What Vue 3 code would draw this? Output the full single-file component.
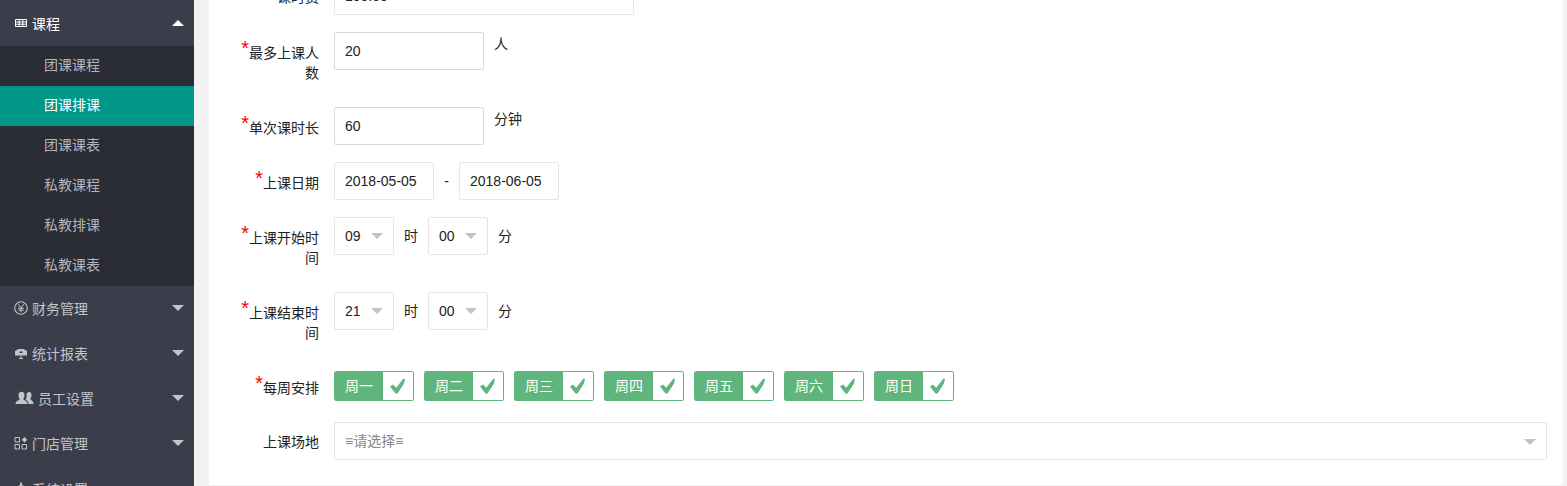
<script setup>
const subItems = [
  { name: '团课课程' },
  { name: '团课排课', active: true },
  { name: '团课课表' },
  { name: '私教课程' },
  { name: '私教排课' },
  { name: '私教课表' }
]
const weekDays = ['周一', '周二', '周三', '周四', '周五', '周六', '周日']
</script>

<template>
<div class="page">
  <aside class="side">
    <div class="nav-head nav-open">
      <svg class="ico" viewBox="0 0 14 14"><path d="M1.500 3.500h11v7h-11zM1.500 6h11M1.500 8.200h11M5.200 3.500v7M8.800 3.500v7" fill="none" stroke="currentColor" stroke-width="1"/></svg>
      <span>课程</span>
      <i class="tri tri-up"></i>
    </div>
    <div
      v-for="item in subItems"
      :key="item.name"
      class="nav-sub"
      :class="{ 'nav-sub-active': item.active }"
    >{{ item.name }}</div>
    <div class="nav-head">
      <svg class="ico" viewBox="0 0 14 14"><circle cx="7" cy="7" r="6.300" fill="none" stroke="currentColor" stroke-width="1.100"/><path d="M4.300 3.300L7 7l2.700-3.700M7 7v4.200M4.200 7.300h5.600M4.200 9.200h5.600" fill="none" stroke="currentColor"/></svg>
      <span>财务管理</span>
      <i class="tri"></i>
    </div>
    <div class="nav-head">
      <svg class="ico" viewBox="0 0 14 14"><path d="M1 5l3.500-2h5L13 5v4.500H1z" fill="currentColor"/><path d="M5.500 5.500h3v1.500h-3z" fill="#3b3e4a"/><path d="M7 9.500v3M5 12.500h4" stroke="currentColor" fill="none"/></svg>
      <span>统计报表</span>
      <i class="tri"></i>
    </div>
    <div class="nav-head">
      <svg class="ico ico-wide" viewBox="0 0 18 14"><path d="M0 13c0-3 3-3.500 4-4.500V7.500C3.200 6.500 3 5.500 3 4c0-2 1-3.300 3-3.300S9 2 9 4c0 1.500-.2 2.500-1 3.500v1c1 1 4 1.500 4 4.500z" fill="currentColor"/><path d="M13 13c0-2.500-1.500-3.500-3-4.500 1-1.500 1-2.500 1-4.500 0-1 .5-3 2.500-3S16 2.500 16 4.500c0 1-.3 2-1 3v1c1 .8 3 1.500 3 4.500z" fill="currentColor"/></svg>
      <span>员工设置</span>
      <i class="tri"></i>
    </div>
    <div class="nav-head">
      <svg class="ico" viewBox="0 0 14 14"><path d="M1 1.500h4.500V6H1zM1 8.500h4.500V13H1zM8 8.500h4.500V13H8z" fill="none" stroke="currentColor"/><path d="M10.500 1l2.700 2.700-2.700 2.700-2.700-2.700z" fill="currentColor"/></svg>
      <span>门店管理</span>
      <i class="tri"></i>
    </div>
    <div class="nav-head nav-last">
      <svg class="ico" viewBox="0 0 14 14"><circle cx="7" cy="7" r="3" fill="none" stroke="currentColor" stroke-width="2"/><path d="M7 .5v3M7 10.500v3M.5 7h3M10.500 7h3" stroke="currentColor" stroke-width="2"/></svg>
      <span>系统设置</span>
      <i class="tri"></i>
    </div>
  </aside>

  <main class="main">
    <div class="card">
      <form class="form">
        <div class="row">
          <label class="lab lab-plain">课时费</label>
          <div class="box box-fee">100.00</div>
        </div>

        <div class="row row-tall">
          <label class="lab"><b class="star">*</b>最多上课人数</label>
          <div class="box box-num">20</div>
          <span class="unit unit-top">人</span>
        </div>

        <div class="row">
          <label class="lab"><b class="star">*</b>单次课时长</label>
          <div class="box box-num">60</div>
          <span class="unit unit-top">分钟</span>
        </div>

        <div class="row">
          <label class="lab"><b class="star">*</b>上课日期</label>
          <div class="box box-date">2018-05-05</div>
          <span class="dash">-</span>
          <div class="box box-date">2018-06-05</div>
        </div>

        <div class="row row-tall">
          <label class="lab"><b class="star">*</b>上课开始时间</label>
          <div class="box box-sel">09<i class="tri-sel"></i></div>
          <span class="unit">时</span>
          <div class="box box-sel">00<i class="tri-sel"></i></div>
          <span class="unit">分</span>
        </div>

        <div class="row row-tall">
          <label class="lab"><b class="star">*</b>上课结束时间</label>
          <div class="box box-sel">21<i class="tri-sel"></i></div>
          <span class="unit">时</span>
          <div class="box box-sel">00<i class="tri-sel"></i></div>
          <span class="unit">分</span>
        </div>

        <div class="row row-week">
          <label class="lab lab-week"><b class="star">*</b>每周安排</label>
          <div class="week">
            <div v-for="day in weekDays" :key="day" class="check">
              <span class="check-name">{{ day }}</span>
              <span class="check-mark">
                <svg viewBox="0 0 18 18" width="18" height="18"><path d="M1 9.500L4 7.500l3.200 3.200L14.500 1.500l1.500.5-1 4.500-6.500 10H6.500z" fill="#5fb57b"/></svg>
              </span>
            </div>
          </div>
        </div>

        <div class="row row-last">
          <label class="lab lab-plain">上课场地</label>
          <div class="box box-place">≡请选择≡<i class="tri-sel tri-dark"></i></div>
        </div>
      </form>
    </div>
  </main>
</div>
</template>

<style>
html, body {
  margin: 0;
  background: #f2f2f3;
}
</style>

<style scoped>
.page {
  display: flex;
  width: 1567px;
  height: 486px;
  overflow: hidden;
  font-family: "Liberation Sans", "Noto Sans CJK SC", sans-serif;
  font-size: 14px;
  color: #222;
}

.side {
  flex: none;
  width: 194px;
  background: #3b3e4a;
}
.nav-head {
  box-sizing: border-box;
  display: flex;
  align-items: center;
  height: 45px;
  padding-left: 14px;
  padding-bottom: 2px;
  color: #c2c4c9;
}
.nav-open {
  height: 46px;
  padding-bottom: 0;
  color: #fff;
}
.nav-last {
  padding-bottom: 0;
}
.nav-head span {
  margin-left: 4px;
}
.ico {
  flex: none;
  width: 14px;
  height: 14px;
}
.ico-wide {
  width: 19px;
  margin-left: 1px;
}
.tri {
  margin-left: auto;
  margin-right: 10px;
  border-left: 6px solid transparent;
  border-right: 6px solid transparent;
  border-top: 6px solid #c2c4c9;
}
.tri-up {
  border-top: 0;
  border-bottom: 6px solid #fff;
}
.nav-sub {
  box-sizing: border-box;
  height: 40px;
  padding-left: 44px;
  line-height: 38px;
  background: #2a2c36;
  color: #b4b5b9;
}
.nav-sub-active {
  background: #009688;
  color: #fff;
}

.main {
  flex: 1;
  padding: 0 4px 1px 15px;
}
.card {
  height: 100%;
  background: #fff;
  overflow: hidden;
}
.form {
  margin-top: -23px;
  padding-left: 25px;
}

.row {
  display: flex;
  align-items: flex-start;
  min-height: 38px;
  margin-bottom: 17px;
}
.row-tall {
  min-height: 58px;
}
.row-week {
  padding: 4px 0;
  min-height: 30px;
}
.lab {
  flex: none;
  width: 85px;
  margin-right: 15px;
  padding-top: 11px;
  line-height: 20px;
  text-align: right;
  color: #222;
}
.lab-plain {
  padding-top: 10px;
}
.lab-week {
  padding-top: 7px;
}
.star {
  font-weight: normal;
  font-size: 20px;
  line-height: 0;
  color: #f00;
  vertical-align: 3px;
}

.box {
  box-sizing: border-box;
  position: relative;
  flex: none;
  height: 38px;
  padding-left: 10px;
  line-height: 36px;
  border: 1px solid #e6e6e6;
  border-radius: 2px;
  background: #fff;
  color: #222;
}
.box-fee {
  width: 300px;
}
.box-num {
  width: 150px;
  border-color: #d9d9d9;
}
.box-date {
  width: 100px;
}
.box-sel {
  width: 60px;
}
.box-place {
  width: 1213px;
  color: #888;
}
.tri-sel {
  position: absolute;
  top: 15px;
  right: 10px;
  border-left: 6px solid transparent;
  border-right: 6px solid transparent;
  border-top: 6px solid #c2c2c2;
}
.tri-dark {
  top: 16px;
}
.dash {
  width: 25px;
  line-height: 38px;
  text-align: center;
}
.unit {
  flex: none;
  width: 34px;
  line-height: 38px;
  text-align: center;
}
.unit-top {
  width: auto;
  margin-left: 10px;
  line-height: 24px;
}

.week {
  display: flex;
  gap: 10px;
}
.check {
  box-sizing: border-box;
  display: flex;
  width: 80px;
  height: 30px;
  border: 1px solid #5fb57b;
  border-radius: 2px;
  background: #fff;
  overflow: hidden;
}
.check-name {
  box-sizing: border-box;
  width: 48px;
  padding-left: 10px;
  line-height: 28px;
  background: #5fb57b;
  color: #fff;
}
.check-mark {
  display: flex;
  align-items: center;
  justify-content: center;
  flex: 1;
}
</style>
